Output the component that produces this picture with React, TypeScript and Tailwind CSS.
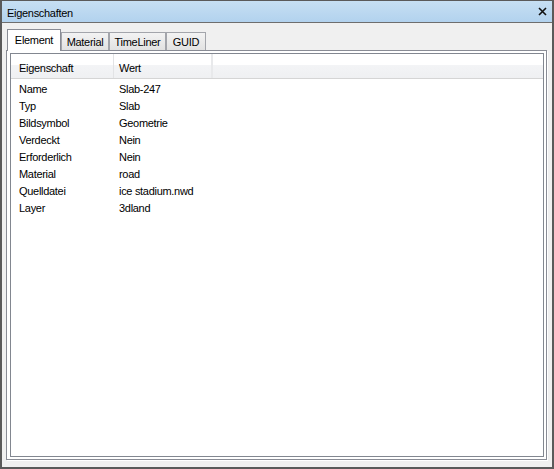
const rows: [string, string][] = [
  ["Name", "Slab-247"],
  ["Typ", "Slab"],
  ["Bildsymbol", "Geometrie"],
  ["Verdeckt", "Nein"],
  ["Erforderlich", "Nein"],
  ["Material", "road"],
  ["Quelldatei", "ice stadium.nwd"],
  ["Layer", "3dland"],
];

const tabs = [
  { label: "Material", w: "w-[48px]" },
  { label: "TimeLiner", w: "w-[57px]" },
  { label: "GUID", w: "w-[40px]" },
];

export default function App() {
  return (
    <div
      className="w-[554px] h-[469px] flex flex-col border-x-2 border-b-2 border-t border-[#5a5a5a] text-[11px] tracking-[-0.3px] text-black"
      style={{ fontFamily: '"Liberation Sans", Arial, sans-serif' }}
    >
      {/* title bar */}
      <div className="h-[22px] flex justify-between border-b border-[#6e6e6e] bg-gradient-to-b from-[#c6dff3] to-[#b2d2ee]">
        <span className="pl-[5px] pt-[4px] leading-[16px]">Eigenschaften</span>
        <svg className="mt-[6px] mr-[5px]" width="9" height="9" viewBox="0 0 9 9">
          <path d="M1 1 L8 8 M8 1 L1 8" stroke="#111" strokeWidth="1.6" />
        </svg>
      </div>

      {/* body */}
      <div className="flex-1 flex flex-col bg-[#f0f0f0] pl-[4px] pr-[5px] pt-[6px] pb-[7px]">
        <div className="flex items-end h-[21px] pl-[1px] relative z-10">
          <div className="w-[54px] h-[22px] -mb-[1px] bg-white border-t border-x border-[#898c95] text-center pt-[3px] leading-[14px]">
            Element
          </div>
          {tabs.map((t) => (
            <div
              key={t.label}
              className={`${t.w} h-[18px] border-t border-x border-[#a3a5ab] bg-gradient-to-b from-[#f3f3f3] to-[#e2e2e2] text-center pt-[2px] leading-[14px]`}
            >
              {t.label}
            </div>
          ))}
        </div>

        <div className="flex-1 flex flex-col bg-white border border-[#898c95] shadow-[1px_1px_0_#ffffff] pl-[3px] pr-[2px] pt-[2px] pb-[2px]">
          <div className="flex-1 flex flex-col border border-[#828790]">
            <div className="h-[25px] flex border-b border-[#d5d5d5] bg-[linear-gradient(to_bottom,#ffffff_45%,#f3f4f6_45%,#eff0f2_100%)]">
              <div className="w-[103px] border-r border-[#e2e3e5] pl-[8px] pt-[7px] leading-[14px]">Eigenschaft</div>
              <div className="w-[99px] border-r-2 border-[#e8e9eb] pl-[5px] pt-[7px] leading-[14px]">Wert</div>
              <div className="flex-1" />
            </div>
            <div className="pt-[2px]">
              {rows.map(([k, v]) => (
                <div key={k} className="flex h-[17px] leading-[17px]">
                  <div className="w-[103px] pl-[8px]">{k}</div>
                  <div className="pl-[5px]">{v}</div>
                </div>
              ))}
            </div>
          </div>
        </div>
      </div>
    </div>
  );
}
